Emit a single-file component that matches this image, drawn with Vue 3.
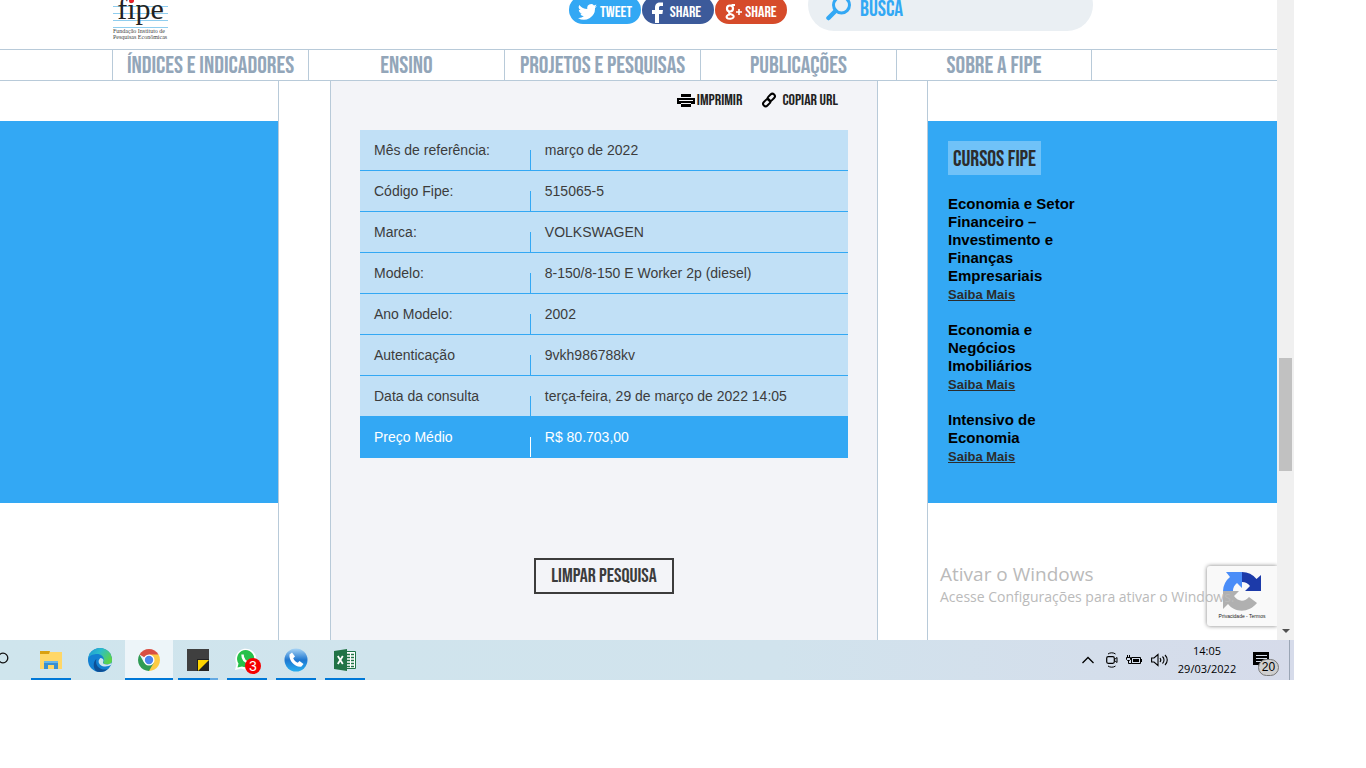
<script setup>
const menu = ['Índices e indicadores', 'Ensino', 'Projetos e pesquisas', 'Publicações', 'Sobre a Fipe']

const rows = [
  ['Mês de referência:', 'março de 2022'],
  ['Código Fipe:', '515065-5'],
  ['Marca:', 'VOLKSWAGEN'],
  ['Modelo:', '8-150/8-150 E Worker 2p (diesel)'],
  ['Ano Modelo:', '2002'],
  ['Autenticação', '9vkh986788kv'],
  ['Data da consulta', 'terça-feira, 29 de março de 2022 14:05'],
  ['Preço Médio', 'R$ 80.703,00'],
]

const courses = [
  'Economia e Setor Financeiro – Investimento e Finanças Empresariais',
  'Economia e Negócios Imobiliários',
  'Intensivo de Economia',
]
</script>

<template>
  <div class="desktop">
    <div class="browser">
      <div class="page">
        <header class="header">
          <a class="logo" href="#" aria-label="Fipe">
            <span class="logo-mark">fipe</span>
            <span class="logo-sub">Fundação Instituto de<br />Pesquisas Econômicas</span>
          </a>
          <div class="social">
            <button class="pill tweet" type="button">
              <svg width="19" height="16" viewBox="0 0 24 20"><path fill="#fff" d="M24 2.400a10 10 0 0 1-2.800.8A5 5 0 0 0 23.300.5a10 10 0 0 1-3.100 1.200 4.900 4.900 0 0 0-8.400 4.500A14 14 0 0 1 1.700 1a4.900 4.900 0 0 0 1.500 6.600 5 5 0 0 1-2.200-.6c0 2.400 1.700 4.400 3.900 4.900a5 5 0 0 1-2.200.1 4.900 4.900 0 0 0 4.600 3.400A10 10 0 0 1 0 17.500 14 14 0 0 0 21.500 5c1-.7 1.800-1.600 2.500-2.600z" /></svg>
              Tweet
            </button>
            <button class="pill face" type="button">
              <svg width="12" height="21" viewBox="0 0 12 21"><path fill="#fff" d="M4 21V12H1V8h3V6c0-4 2-5.500 5-5.500h3V4h-2C8.500 4 8 4.600 8 6v2h4l-.6 4H8v9z" /></svg>
              Share
            </button>
            <button class="pill gplus" type="button">
              <svg width="17" height="18" viewBox="0 0 17 18" fill="none" stroke="#fff"><circle cx="5" cy="5.500" r="3" stroke-width="2.200" /><path stroke-width="2" d="M6.500 2H10M4.500 8.800c-1 1.500 0 2 1.500 2.400 2.500.8 3 2 2.500 3-.6 1.800-5 2.200-6.500.8C1 13.500 2 12 5 11.600" /><path stroke-width="1.600" d="M11 9h6M14 6v6" /></svg>
              Share
            </button>
          </div>
          <form class="search" @submit.prevent>
            <svg width="26" height="26" viewBox="0 0 26 26" fill="none" stroke="#33a8f4"><circle cx="15.500" cy="10" r="8" stroke-width="3" /><path d="M9.500 16 2.500 23" stroke-width="4.500" stroke-linecap="round" /></svg>
            <input type="text" placeholder="BUSCA" aria-label="Busca" />
          </form>
        </header>

        <nav class="menu">
          <a v-for="m in menu" :key="m" href="#">{{ m }}</a>
        </nav>

        <div class="columns">
          <aside class="left"><div class="blue-block"></div></aside>

          <main class="main">
            <div class="actions">
              <button type="button">
                <svg width="18" height="13" viewBox="0 0 18 13"><path d="M4 0h10v3H4zM0 4h18v6H0zM4 10h10v3H4z" /><path stroke="#f3f4f8" d="M2 6.500h14M4 9.500h10M3 3.500h12" /></svg>
                Imprimir
              </button>
              <button class="copy" type="button">
                <svg width="16" height="16" viewBox="0 0 16 16" fill="none" stroke="#000" stroke-width="2"><rect x="-4" y="-2.500" width="8" height="5" rx="2.500" transform="translate(10.300 5.300) rotate(-45)" /><rect x="-4" y="-2.500" width="8" height="5" rx="2.500" transform="translate(5.700 10.700) rotate(-45)" /></svg>
                Copiar URL
              </button>
            </div>
            <table class="result">
              <tbody>
                <tr v-for="r in rows" :key="r[0]">
                  <th scope="row">{{ r[0] }}</th>
                  <td>{{ r[1] }}</td>
                </tr>
              </tbody>
            </table>
            <button class="clear" type="button">Limpar pesquisa</button>
          </main>

          <aside class="right">
            <section class="blue-block courses">
              <h2>Cursos Fipe</h2>
              <article v-for="c in courses" :key="c">
                <h3>{{ c }}</h3>
                <a href="#">Saiba Mais</a>
              </article>
            </section>
          </aside>
        </div>

        <div class="captcha">
          <svg width="40" height="40" viewBox="0 0 40 40">
            <path fill="#1c3aa9" d="M20 1A19 19 0 0 1 34.500 8L39 4v16H23l5-5a10 10 0 0 0-8-4z" />
            <path fill="#4a8df8" d="M20 1v16l-5-5a10 10 0 0 0-4 8H1A19 19 0 0 1 8 6L4 1z" />
            <path fill="#b0b0b0" d="M1 20h16l-5 5c4 6 11 6 15 1l8 6c-8 10-22 10-29 1l-5 5z" />
          </svg>
          <span>Privacidade - Termos</span>
        </div>
        <div class="watermark">
          <strong>Ativar o Windows</strong>
          <span>Acesse Configurações para ativar o Windows.</span>
        </div>
      </div>

      <div class="scrollbar">
        <span class="thumb"></span>
        <svg width="8" height="4" viewBox="0 0 8 4"><path fill="#505050" d="M0 0h8L4 4z" /></svg>
      </div>
    </div>

    <footer class="taskbar">
      <svg class="find" width="9" height="14" viewBox="0 0 9 14"><circle cx="3" cy="7" r="4.800" fill="none" stroke="#111" stroke-width="1.300" /></svg>
      <div class="apps">
        <button class="app open" type="button" aria-label="Explorador de Arquivos">
          <svg width="24" height="24" viewBox="0 0 24 24"><path fill="#ffd767" d="M1 4h22v17H1z" /><path fill="#d9a010" d="M1 3h10l-1 3H1z" /><path fill="#3a8fd0" d="M5 13h14v8h-4v-4H9v4H5z" /><path fill="#66b5ea" d="M5 13h14v2H5z" /></svg>
        </button>
        <button class="app" type="button" aria-label="Edge">
          <svg width="26" height="26" viewBox="0 0 26 26">
            <defs>
              <linearGradient id="eg" x1="0" y1="0" x2="1" y2=".5"><stop offset="0" stop-color="#1c8fd8" /><stop offset=".5" stop-color="#2cbccb" /><stop offset="1" stop-color="#5bd34b" /></linearGradient>
              <clipPath id="ec"><circle cx="13" cy="13" r="12" /></clipPath>
            </defs>
            <g clip-path="url(#ec)">
              <path fill="#1380d2" d="M0 0h26v26H0z" />
              <path fill="url(#eg)" d="M0 13C2 8 7 7 10 7c5 0 8 4 6.500 7.500-.8 2 .5 3 3 3 3.500 0 6.500-2 6.500-5V0H0z" />
              <path fill="#0d4f96" d="M9.500 12c-2 6 3 11 9 10.500 2.500-.2 5-1.500 6.500-4V26H12C6 24 5 15 9.500 12z" />
              <path fill="#cfe6ee" d="M13.500 11c-2.500 2-2.500 5 0 7 3 2.500 8 2 12.500-1v-2c-3 2.500-7 3-9 2-2-1-.5-2.500-.5-3.500 0-1.300-1.500-2.500-3-2.500z" />
            </g>
          </svg>
        </button>
        <button class="app open active" type="button" aria-label="Chrome">
          <svg width="24" height="24" viewBox="0 0 24 24">
            <path fill="#d94f43" d="M12 12 2.500 6.500a11 11 0 0 1 19 0z" />
            <path fill="#fccb44" d="M12 12V6.500h9.500A11 11 0 0 1 12 23z" />
            <path fill="#2f9b55" d="M12 12l4.800 2.700L12 23A11 11 0 0 1 2.500 6.500L7.200 14.700z" />
            <circle cx="12" cy="12" r="5.500" fill="#fff" /><circle cx="12" cy="12" r="4.200" fill="#4a84ee" />
          </svg>
        </button>
        <button class="app open stacked" type="button" aria-label="Notas">
          <svg width="22" height="22" viewBox="0 0 22 22"><path fill="#3f3f3f" d="M0 0h22v22H0z" /><path fill="#222" d="M10 10h12v12H10z" /><path fill="#ffd500" d="M11 11h11L11 22z" /></svg>
        </button>
        <button class="app open chat" type="button" aria-label="WhatsApp">
          <svg width="22" height="24" viewBox="0 0 22 24">
            <path fill="#fff" d="M0 22l1.500-6A10.500 10.500 0 1 1 6 20.500z" />
            <path fill="#27c04a" d="M2.500 19.500l1-4A8.600 8.600 0 1 1 7 18.500z" />
            <path fill="none" stroke="#fff" stroke-width="2.500" d="M7.500 6.500c0 5 3 8 8 8.500" />
          </svg>
          <span class="unread">3</span>
        </button>
        <button class="app open" type="button" aria-label="Telefone">
          <svg width="24" height="24" viewBox="0 0 24 24">
            <defs><linearGradient id="ph" x1="0" y1="0" x2="0" y2="1"><stop offset="0" stop-color="#a8d4f5" /><stop offset=".5" stop-color="#1f77d0" /><stop offset="1" stop-color="#26aef0" /></linearGradient></defs>
            <circle cx="12" cy="12" r="11.500" fill="url(#ph)" />
            <path fill="#fff" d="M5.500 6.500 8 4.500l3 4-1.800 1.700c1 2.200 2.300 3.500 4.600 4.600l1.700-1.800 4 3-2 2.500C12.500 20 4.500 13.500 5.500 6.500z" />
          </svg>
        </button>
        <button class="app open" type="button" aria-label="Excel">
          <svg width="24" height="24" viewBox="0 0 24 24">
            <path fill="#fff" stroke="#217346" d="M12 3.500h10.500v17H12z" />
            <path stroke="#217346" stroke-width="1.500" stroke-dasharray="3 1" d="M14 6.500h7M14 9.500h7M14 12.500h7M14 15.500h7M14 18.500h7" />
            <path fill="#217346" d="M1 3l13-2v22L1 21z" />
            <path stroke="#fff" stroke-width="1.800" d="M4.800 8l5 8M9.800 8l-5 8" />
          </svg>
        </button>
      </div>
      <div class="tray">
        <svg width="12" height="8" viewBox="0 0 12 8"><path fill="none" stroke="#000" stroke-width="1.300" d="M.5 7 6 1.500 11.500 7" /></svg>
        <svg width="12" height="16" viewBox="0 0 12 16" fill="none" stroke="#000"><rect x=".7" y="4.700" width="7.600" height="6.600" rx="1.500" stroke-width="1.200" /><path d="M8.500 7.500 11 5.500v5L8.500 8.500M2 2c2-1.600 5.500-1.600 7.500 0M2 14c2 1.600 5.500 1.600 7.500 0" /></svg>
        <svg width="17" height="12" viewBox="0 0 17 12"><path fill="none" stroke="#000" d="M5.500 3.500h9v6h-9zM15.500 5v3M.5 3.500h4v2l-1 1h-2l-1-1zM1.500 3V1M3.500 3V1M2.500 7v2.500h3" /><path d="M7 5h6v3H7z" /></svg>
        <svg width="18" height="14" viewBox="0 0 18 14"><path fill="none" stroke="#000" stroke-width="1.100" d="M.6 5h2.400L7 1.500v11L3 9H.600zM9 5c1 1.200 1 2.800 0 4M11.500 3.500c2 2 2 5 0 7M14 2c3 3 3 7 0 10" /></svg>
        <div class="clock"><span>14:05</span><span>29/03/2022</span></div>
        <div class="notice">
          <svg width="17" height="17" viewBox="0 0 17 17"><path d="M0 0h16v13H8v3l-3-3H0z" /><path stroke="#d5dcea" d="M3 3.500h11M3 6.500h11M3 9.500h7" /></svg>
          <span class="count">20</span>
        </div>
      </div>
    </footer>
  </div>
</template>

<style>
body {
  background: #fff;
}
</style>

<style scoped>
* {
  box-sizing: border-box;
}
.desktop {
  margin-right: 72px;
  font-family: "Liberation Sans", Arial, sans-serif;
}
button {
  border: 0;
  padding: 0;
  background: none;
  cursor: pointer;
}
.browser {
  display: flex;
}
.page {
  position: relative;
  flex: 1;
  min-width: 0;
  overflow: hidden;
}
.header {
  display: grid;
  grid-template-columns: 113fr 456fr 239fr 285fr 184fr;
  height: 49px;
}
.pill,
.menu a,
.actions button,
.clear,
.courses h2,
.search input {
  font-family: "Bebas Neue", "Liberation Sans Narrow", "Arial Narrow", "Liberation Sans", sans-serif;
  text-transform: uppercase;
  font-weight: 400;
}
.logo {
  grid-column: 2;
  width: 55px;
  height: 40px;
  display: flex;
  flex-direction: column;
  color: #222;
  text-decoration: none;
  font-family: "Liberation Serif", serif;
}
.logo-mark {
  position: relative;
  height: 28px;
  font-size: 30px;
  line-height: 18px;
  text-align: center;
  background: repeating-linear-gradient(#fff 0 6px, #8fcdee 6px 7px);
}
.logo-mark::after {
  content: "";
  position: absolute;
  left: 16px;
  top: 0;
  width: 5px;
  height: 3px;
  border-radius: 0 0 3px 3px;
  background: #e8202a;
}
.logo-sub {
  font-size: 6px;
  line-height: 6px;
  white-space: nowrap;
  color: #444;
}
.social {
  grid-column: 3;
  display: flex;
  gap: 1px;
}
.pill {
  width: 72px;
  height: 28px;
  margin-top: -4px;
  padding-top: 4px;
  border-radius: 14px;
  display: flex;
  align-items: center;
  justify-content: center;
  gap: 3px;
  color: #fff;
  font-size: 16px;
  overflow: hidden;
}
.tweet { background: #33a8f4; }
.face { background: #3c5a9a; padding-right: 4px; gap: 7px; }
.gplus { background: #d64b2a; }
.search {
  grid-column: 4;
  display: flex;
  gap: 8px;
  height: 52px;
  margin-top: -21px;
  padding: 16px 18px 0;
  border-radius: 26px;
  background: #eaeff3;
}
.search input {
  flex: 1;
  min-width: 0;
  height: 28px;
  border: 0;
  padding: 0;
  background: none;
  font-size: 22px;
}
.search input::placeholder {
  color: #33a8f4;
  opacity: 1;
}
.menu {
  display: grid;
  grid-template-columns: 112fr repeat(5, 196fr) 185fr;
  height: 32px;
  border-top: 1px solid #b8cad9;
  border-bottom: 1px solid #b8cad9;
}
.menu a {
  height: 30px;
  border-left: 1px solid #b8cad9;
  color: #93a6b9;
  font-size: 24px;
  line-height: 32px;
  text-align: center;
  text-decoration: none;
  white-space: nowrap;
}
.menu a:first-child { grid-column: 2; }
.menu a:last-child { border-right: 1px solid #b8cad9; }
.columns {
  display: grid;
  grid-template-columns: 279fr 51fr 548fr 49fr 350fr;
}
.left,
.right {
  padding: 40px 0 137px;
}
.left { border-right: 1px solid #b8cad9; }
.right { grid-column: 5; border-left: 1px solid #b8cad9; }
.blue-block {
  height: 100%;
  min-height: 382px;
  background: #33a8f4;
}
.main {
  grid-column: 3;
  display: flex;
  flex-direction: column;
  align-items: center;
  padding: 9px 29px 46px;
  border: solid #b8cad9;
  border-width: 0 1px;
  background: #f3f4f8;
}
.actions {
  align-self: flex-end;
  display: flex;
  gap: 19px;
  padding-right: 10px;
  height: 40px;
  align-items: flex-start;
}
.actions button {
  display: flex;
  align-items: center;
  gap: 2px;
  height: 20px;
  color: #222;
  font-size: 16px;
}
.actions .copy { gap: 5px; }
.result {
  width: 100%;
  border-collapse: separate;
  border-spacing: 0;
  background: #c1e0f6;
  color: #3c3c3c;
  font-size: 14px;
}
.result th,
.result td {
  height: 41px;
  padding: 0 14px;
  border-bottom: 1px solid #33a8f4;
  text-align: left;
  font-weight: 400;
}
.result th {
  width: 35%;
  background: linear-gradient(#33a8f4, #33a8f4) right bottom / 1px 20px no-repeat;
}
.result tr:last-child {
  background: #33a8f4;
  color: #fff;
}
.result tr:last-child th {
  background-image: linear-gradient(#fff, #fff);
}
.clear {
  width: 140px;
  height: 36px;
  margin-top: 100px;
  border: 2px solid #3c3c3c;
  color: #3c3c3c;
  font-size: 20px;
}
.courses {
  padding: 20px 20px 38px;
}
.courses h2 {
  display: block;
  width: fit-content;
  height: 34px;
  margin: 0 0 20px;
  padding: 0 5px;
  background: #70c2f8;
  color: #2c2c2c;
  font-size: 22px;
  line-height: 37px;
}
.courses article {
  width: 130px;
  margin-bottom: 18px;
  line-height: 18px;
}
.courses article:last-child { margin-bottom: 0; }
.courses h3 {
  margin: 0;
  color: #000;
  font-size: 15px;
  line-height: 18px;
}
.courses a {
  display: block;
  height: 18px;
  color: #2c2c2c;
  font-size: 13px;
  font-weight: 700;
  line-height: 20px;
}
.captcha {
  position: absolute;
  right: 0;
  bottom: 14px;
  width: 70px;
  height: 60px;
  display: flex;
  flex-direction: column;
  align-items: center;
  padding-top: 5px;
  border-radius: 3px 0 0 3px;
  background: #f9f9f9;
  box-shadow: 0 0 4px #808080;
}
.captcha span {
  font-size: 5px;
  line-height: 10px;
  color: #222;
  white-space: nowrap;
}
.watermark {
  position: absolute;
  right: 37px;
  bottom: 32px;
  width: 300px;
  display: flex;
  flex-direction: column;
  color: #bababa;
  font-family: "Open Sans", sans-serif;
  font-size: 14px;
  line-height: 22px;
  white-space: nowrap;
}
.watermark strong {
  font-size: 19px;
  font-weight: 400;
  line-height: 24px;
}
.scrollbar {
  width: 17px;
  display: flex;
  flex-direction: column;
  justify-content: space-between;
  align-items: center;
  padding: 358px 0 7px;
  background: #f0f0f0;
}
.thumb {
  width: 13px;
  height: 113px;
  background: #c1c1c1;
}
.taskbar {
  display: flex;
  align-items: center;
  height: 40px;
  background: linear-gradient(90deg, #cfe5ed, #d1e3ed 60%, #d6dbea);
}
.find {
  width: 27px;
  padding-right: 18px;
  margin-bottom: 4px;
}
.apps {
  display: flex;
  gap: 1px;
  flex: 1;
}
.app {
  position: relative;
  width: 48px;
  height: 40px;
  display: grid;
  place-items: center;
}
.app.open::after {
  content: "";
  position: absolute;
  left: 4px;
  right: 4px;
  bottom: 0;
  height: 2px;
  background: #0078d7;
}
.app.active { background: #edf5f9; }
.app.active::after { left: 0; right: 0; }
.app.stacked::after {
  background: linear-gradient(90deg, #0078d7 80%, #64a9e2 80%);
}
.app.chat { padding-right: 2px; }
.unread {
  position: absolute;
  left: 22px;
  top: 18px;
  width: 16px;
  height: 16px;
  border-radius: 50%;
  background: #f50000;
  color: #fff;
  font-family: "Liberation Sans", sans-serif;
  font-size: 14px;
  line-height: 16px;
  text-align: center;
}
.tray {
  display: flex;
  align-items: center;
  align-self: stretch;
  gap: 12px;
  padding-right: 16px;
  margin-right: 4px;
  border-right: 1px solid #9aa5b5;
}
.tray svg:nth-child(2),
.tray svg:nth-child(3) { margin-right: -4px; }
.clock {
  width: 60px;
  margin-left: -4px;
  display: flex;
  flex-direction: column;
  font-family: "Open Sans", sans-serif;
  font-size: 11px;
  line-height: 18px;
  text-align: center;
}
.notice {
  position: relative;
  width: 20px;
  height: 17px;
  margin-left: 4px;
}
.count {
  position: absolute;
  left: 5px;
  top: 7px;
  width: 21px;
  height: 17px;
  border: 1px solid #777;
  border-radius: 9px;
  background: #cfcfcf;
  font-size: 12px;
  line-height: 15px;
  text-align: center;
}
</style>
